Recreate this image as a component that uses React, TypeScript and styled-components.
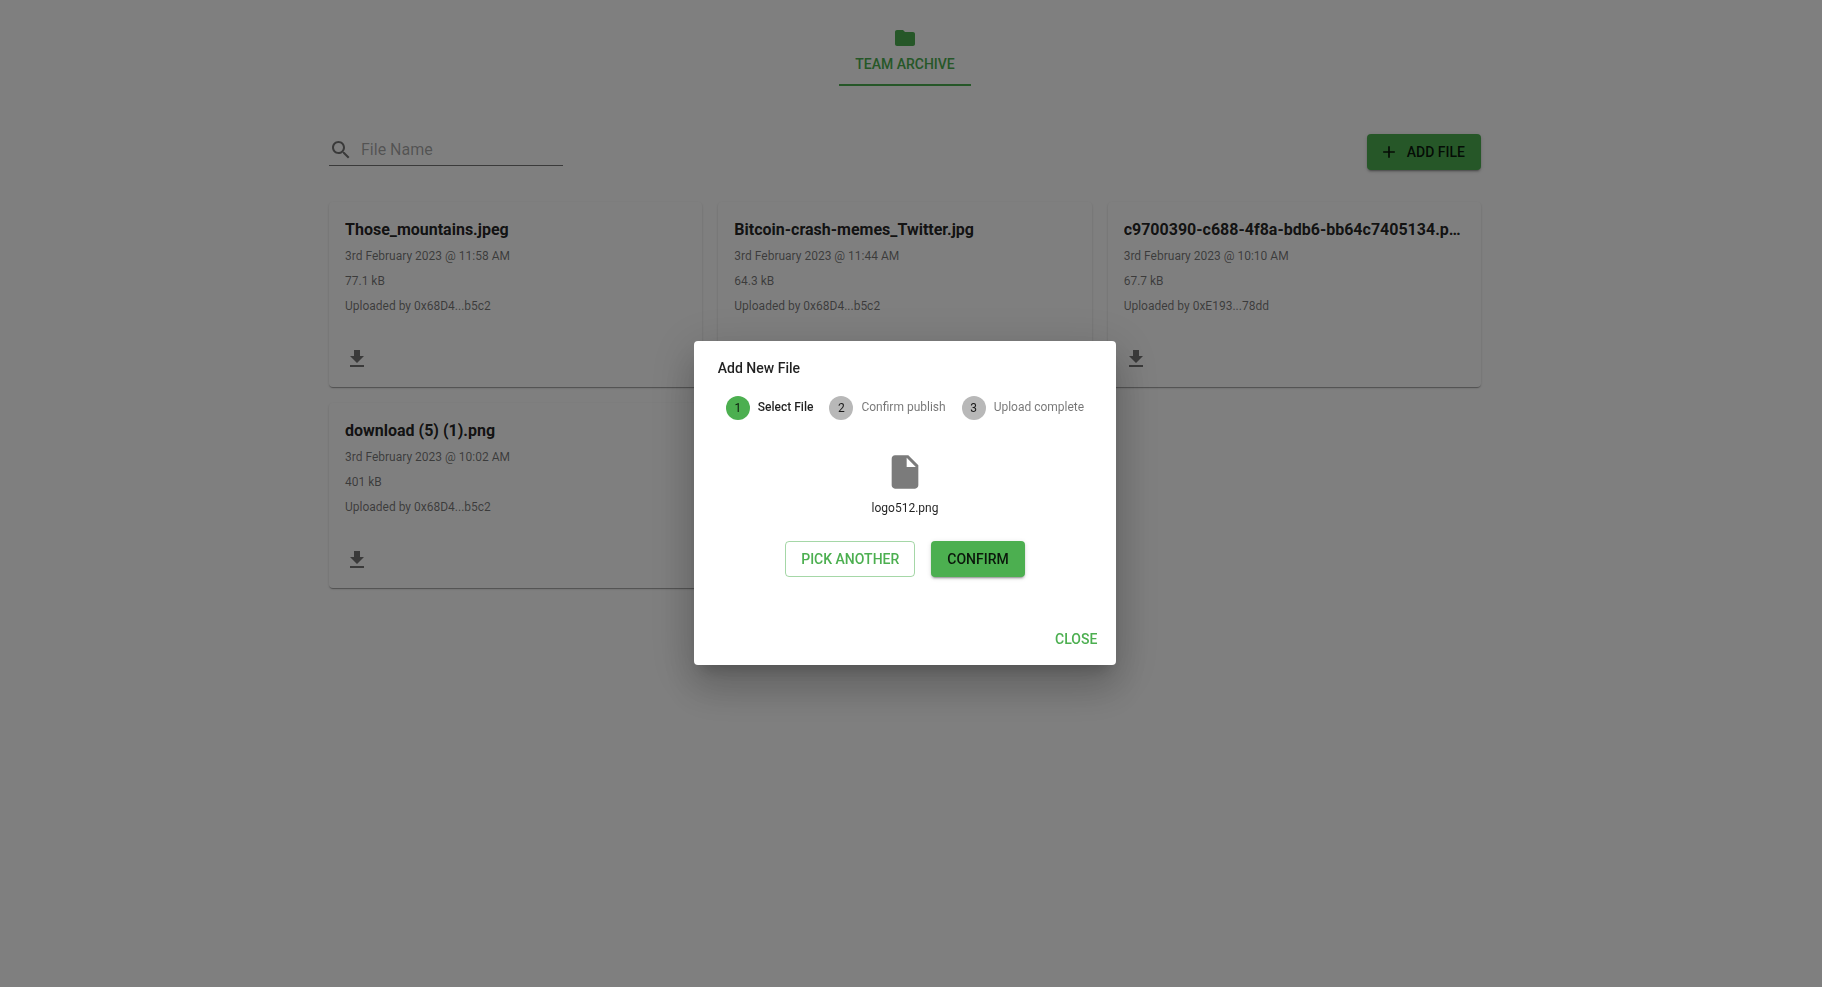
import React, { useState } from 'react';
import styled, { createGlobalStyle, css } from 'styled-components';

const green = '#4caf50';
const textPrimary = 'rgba(0, 0, 0, 0.87)';
const textSecondary = 'rgba(0, 0, 0, 0.54)';
const iconGrey = 'rgba(0, 0, 0, 0.54)';

const GlobalStyle = createGlobalStyle`
  *, *::before, *::after { box-sizing: border-box; }
  body {
    margin: 0;
    background: #fff;
    color: ${textPrimary};
    font-family: Roboto, "Liberation Sans", sans-serif;
    font-size: 14px;
  }
  h2, h3, p, ul, ol { margin: 0; padding: 0; }
  ul, ol { list-style: none; }
  button, input { font: inherit; }
`;

const Page = styled.div`
  padding: 14px 12px 32px 0;
`;

const Tabs = styled.nav`
  display: flex;
  justify-content: center;
`;

const Tab = styled.a`
  display: flex;
  flex-direction: column;
  align-items: center;
  gap: 4px;
  padding: 12px 16px 10px;
  border-bottom: 2px solid ${green};
  color: ${green};
  font-weight: 500;
  line-height: 20px;
  text-decoration: none;
  text-transform: uppercase;
`;

const Main = styled.main`
  max-width: 1200px;
  margin: 0 auto;
  padding: 48px 24px 0;
`;

const Toolbar = styled.div`
  display: flex;
  align-items: flex-start;
  justify-content: space-between;
  margin-bottom: 32px;
`;

const SearchField = styled.label`
  display: flex;
  align-items: center;
  gap: 8px;
  width: 234px;
  height: 32px;
  border-bottom: 1px solid rgba(0, 0, 0, 0.54);
  color: ${iconGrey};
`;

const SearchInput = styled.input`
  flex: 1;
  min-width: 0;
  padding: 0;
  border: 0;
  outline: 0;
  background: none;
  color: ${textPrimary};
  font-size: 16px;
  line-height: 24px;
  &::placeholder {
    color: rgba(0, 0, 0, 0.36);
    opacity: 1;
  }
`;

type Variant = 'contained' | 'outlined' | 'text';

const variants = {
  contained: css`
    padding: 6px 16px;
    background: ${green};
    color: ${textPrimary};
    box-shadow: 0 3px 1px -2px rgba(0, 0, 0, 0.2), 0 2px 2px 0 rgba(0, 0, 0, 0.14),
      0 1px 5px 0 rgba(0, 0, 0, 0.12);
  `,
  outlined: css`
    padding: 5px 15px;
    border: 1px solid rgba(76, 175, 80, 0.5);
  `,
  text: css`
    padding: 6px 8px;
  `,
};

const Button = styled.button<{ $variant: Variant }>`
  display: inline-flex;
  align-items: center;
  justify-content: center;
  min-width: 64px;
  border: 0;
  border-radius: 4px;
  background: none;
  color: ${green};
  font-weight: 500;
  line-height: 24px;
  text-transform: uppercase;
  cursor: pointer;
  ${(p) => variants[p.$variant]}
`;

const StartIcon = styled.span`
  display: flex;
  margin-left: -4px;
  margin-right: 8px;
`;

const Grid = styled.ul`
  display: grid;
  grid-template-columns: repeat(3, minmax(0, 1fr));
  gap: 16px;
`;

const Card = styled.li`
  border-radius: 4px;
  background: #fff;
  box-shadow: 0 2px 1px -1px rgba(0, 0, 0, 0.2), 0 1px 1px 0 rgba(0, 0, 0, 0.14),
    0 1px 3px 0 rgba(0, 0, 0, 0.12);
`;

const CardBody = styled.div`
  padding: 16px 16px 12px;
`;

const CardTitle = styled.h3`
  margin-bottom: 2px;
  overflow: hidden;
  font-size: 16px;
  font-weight: 700;
  line-height: 24px;
  text-overflow: ellipsis;
  white-space: nowrap;
`;

const CardMeta = styled.p`
  color: ${textSecondary};
  font-size: 12px;
  line-height: 25px;
`;

const CardActions = styled.div`
  display: flex;
  padding: 8px;
`;

const IconButton = styled.button`
  display: flex;
  padding: 8px;
  border: 0;
  border-radius: 50%;
  background: none;
  color: ${iconGrey};
  cursor: pointer;
`;

const Backdrop = styled.div`
  position: fixed;
  inset: 0;
  display: flex;
  align-items: center;
  justify-content: center;
  padding: 19px 12px 0 0;
  background: rgba(0, 0, 0, 0.5);
`;

const Dialog = styled.div`
  border-radius: 4px;
  background: #fff;
  box-shadow: 0 11px 15px -7px rgba(0, 0, 0, 0.2), 0 24px 38px 3px rgba(0, 0, 0, 0.14),
    0 9px 46px 8px rgba(0, 0, 0, 0.12);
`;

const DialogTitle = styled.h2`
  padding: 15px 24px 16px;
  font-size: 14px;
  font-weight: 500;
  line-height: 24px;
`;

const DialogContent = styled.div`
  padding: 0 24px;
`;

const Stepper = styled.ol`
  display: flex;
  gap: 16px;
  padding: 0 8px;
`;

const Step = styled.li<{ $active: boolean }>`
  display: flex;
  gap: 8px;
  color: ${(p) => (p.$active ? textPrimary : textSecondary)};
  font-size: 12px;
  font-weight: ${(p) => (p.$active ? 500 : 400)};
  line-height: 22px;
  white-space: nowrap;
`;

const StepNumber = styled.span<{ $active: boolean }>`
  width: 24px;
  height: 24px;
  border-radius: 50%;
  background: ${(p) => (p.$active ? green : '#b8b8b8')};
  color: ${textPrimary};
  font-weight: 400;
  line-height: 24px;
  text-align: center;
`;

const FilePreview = styled.div`
  display: flex;
  flex-direction: column;
  align-items: center;
  gap: 8px;
  padding: 32px 0 25px;
  color: #7b7b7b;
`;

const FileName = styled.p`
  color: ${textPrimary};
  font-size: 12px;
  line-height: 16px;
`;

const ButtonRow = styled.div`
  display: flex;
  justify-content: center;
  gap: 16px;
  padding-bottom: 36px;
`;

const DialogActions = styled.div`
  display: flex;
  justify-content: flex-end;
  padding: 8px;
`;

const Svg = styled.svg<{ $size: number }>`
  display: block;
  flex: none;
  width: ${(p) => p.$size}px;
  height: ${(p) => p.$size}px;
  fill: currentColor;
`;

const paths = {
  folder: 'M10 4H4c-1.1 0-1.99.9-1.99 2L2 18c0 1.1.9 2 2 2h16c1.1 0 2-.9 2-2V8c0-1.1-.9-2-2-2h-8l-2-2z',
  search:
    'M15.5 14h-.79l-.28-.27C15.41 12.59 16 11.11 16 9.5 16 5.91 13.09 3 9.5 3S3 5.91 3 9.5 5.91 16 9.5 16c1.61 0 3.09-.59 4.23-1.57l.27.28v.79l5 4.99L20.49 19l-4.99-5zm-6 0C7.01 14 5 11.99 5 9.5S7.01 5 9.5 5 14 7.01 14 9.5 11.99 14 9.5 14z',
  add: 'M19 13h-6v6h-2v-6H5v-2h6V5h2v6h6v2z',
  download: 'M19 9h-4V3H9v6H5l7 7 7-7zM5 18v2h14v-2H5z',
  file: 'M6 2c-1.1 0-1.99.9-1.99 2L4 20c0 1.1.89 2 1.99 2H18c1.1 0 2-.9 2-2V8l-6-6H6zm7 7V3.5L18.5 9H13z',
};

function Icon({ name, size = 24 }: { name: keyof typeof paths; size?: number }) {
  return (
    <Svg viewBox="0 0 24 24" $size={size} aria-hidden="true">
      <path d={paths[name]} />
    </Svg>
  );
}

const files = [
  { name: 'Those_mountains.jpeg', date: '3rd February 2023 @ 11:58 AM', size: '77.1 kB', owner: '0x68D4...b5c2' },
  { name: 'Bitcoin-crash-memes_Twitter.jpg', date: '3rd February 2023 @ 11:44 AM', size: '64.3 kB', owner: '0x68D4...b5c2' },
  { name: 'c9700390-c688-4f8a-bdb6-bb64c7405134.png', date: '3rd February 2023 @ 10:10 AM', size: '67.7 kB', owner: '0xE193...78dd' },
  { name: 'download (5) (1).png', date: '3rd February 2023 @ 10:02 AM', size: '401 kB', owner: '0x68D4...b5c2' },
];

const steps = ['Select File', 'Confirm publish', 'Upload complete'];

export default function App() {
  const [open, setOpen] = useState(true);
  const [query, setQuery] = useState('');
  const shown = files.filter((f) => f.name.toLowerCase().includes(query.toLowerCase()));

  return (
    <>
      <GlobalStyle />
      <Page>
        <Tabs>
          <Tab href="#archive">
            <Icon name="folder" />
            Team Archive
          </Tab>
        </Tabs>
        <Main>
          <Toolbar>
            <SearchField>
              <Icon name="search" />
              <SearchInput
                type="text"
                aria-label="File Name"
                placeholder="File Name"
                value={query}
                onChange={(e) => setQuery(e.target.value)}
              />
            </SearchField>
            <Button type="button" $variant="contained" onClick={() => setOpen(true)}>
              <StartIcon>
                <Icon name="add" size={20} />
              </StartIcon>
              Add File
            </Button>
          </Toolbar>
          <Grid>
            {shown.map((f) => (
              <Card key={f.name}>
                <CardBody>
                  <CardTitle>{f.name}</CardTitle>
                  <CardMeta>{f.date}</CardMeta>
                  <CardMeta>{f.size}</CardMeta>
                  <CardMeta>Uploaded by {f.owner}</CardMeta>
                </CardBody>
                <CardActions>
                  <IconButton type="button" aria-label={`Download ${f.name}`}>
                    <Icon name="download" />
                  </IconButton>
                </CardActions>
              </Card>
            ))}
          </Grid>
        </Main>
      </Page>
      {open && (
        <Backdrop>
          <Dialog role="dialog" aria-modal="true" aria-labelledby="add-file-title">
            <DialogTitle id="add-file-title">Add New File</DialogTitle>
            <DialogContent>
              <Stepper>
                {steps.map((label, i) => (
                  <Step key={label} $active={i === 0}>
                    <StepNumber $active={i === 0}>{i + 1}</StepNumber>
                    {label}
                  </Step>
                ))}
              </Stepper>
              <FilePreview>
                <Icon name="file" size={40} />
                <FileName>logo512.png</FileName>
              </FilePreview>
              <ButtonRow>
                <Button type="button" $variant="outlined">
                  Pick another
                </Button>
                <Button type="button" $variant="contained">
                  Confirm
                </Button>
              </ButtonRow>
            </DialogContent>
            <DialogActions>
              <Button type="button" $variant="text" onClick={() => setOpen(false)}>
                Close
              </Button>
            </DialogActions>
          </Dialog>
        </Backdrop>
      )}
    </>
  );
}
